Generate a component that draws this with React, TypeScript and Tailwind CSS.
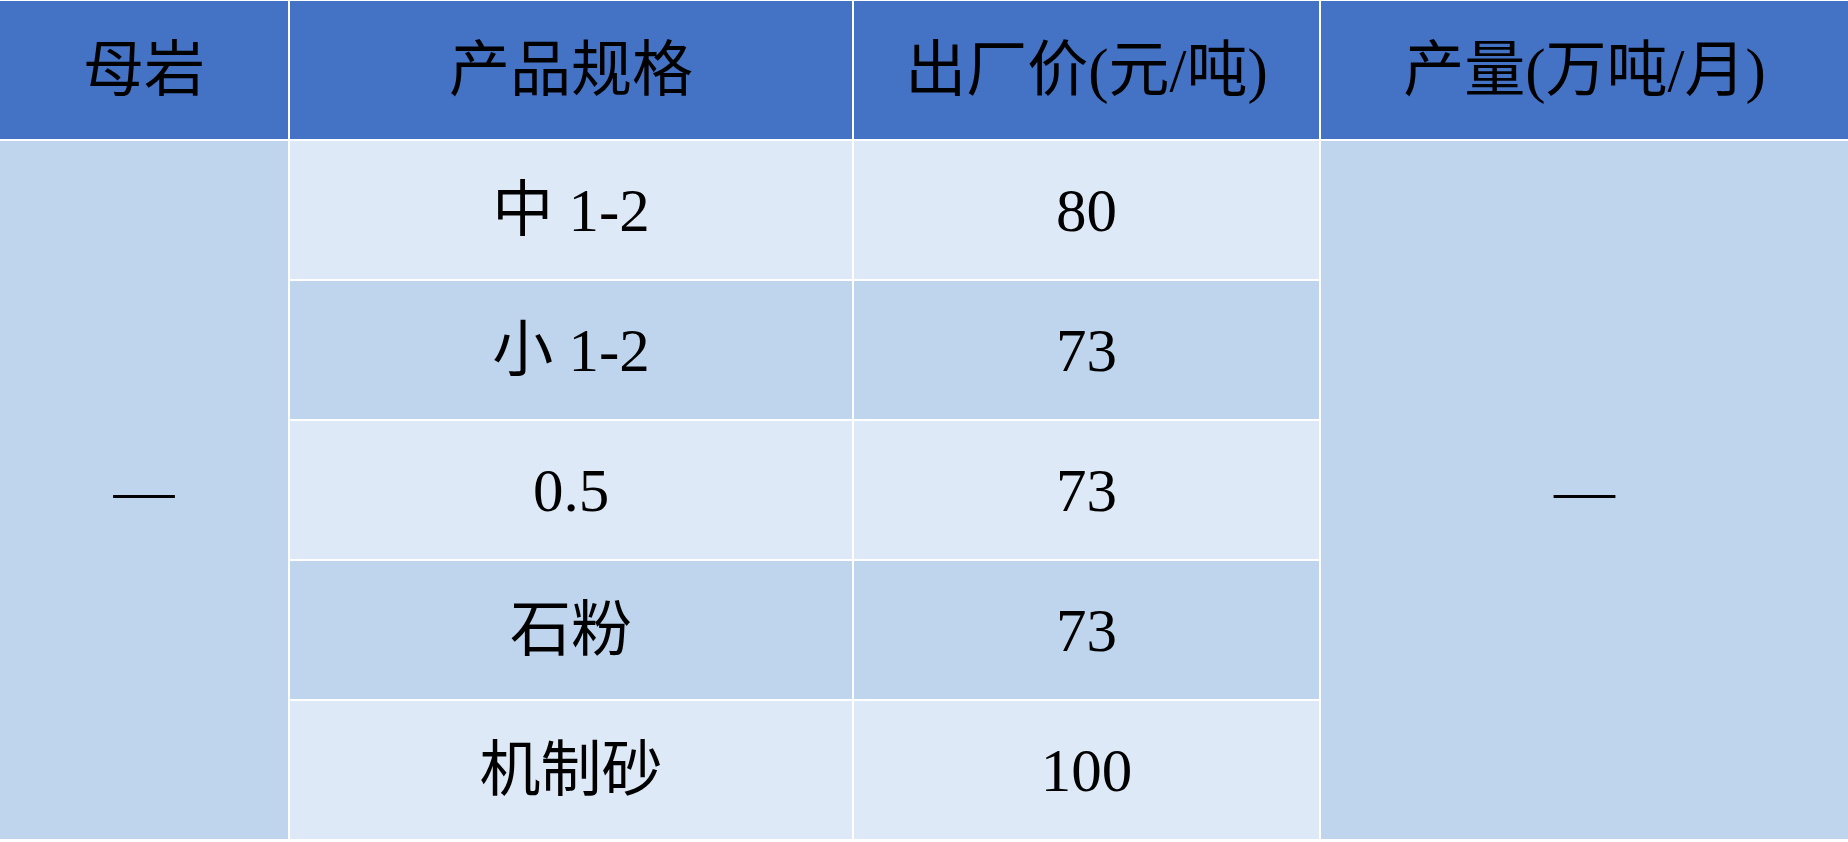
import React from 'react';

const rows = [
  { spec: '中 1-2', price: '80' },
  { spec: '小 1-2', price: '73' },
  { spec: '0.5', price: '73' },
  { spec: '石粉', price: '73' },
  { spec: '机制砂', price: '100' },
];

const headers = ['母岩', '产品规格', '出厂价(元/吨)', '产量(万吨/月)'];

const App: React.FC = () => {
  return (
    <div className="w-[1848px] h-[842px] bg-white pt-px overflow-hidden">
      <div
        className="grid grid-cols-[288px_562px_465px_1fr] grid-rows-[138px_repeat(5,138px)] gap-[2px] text-black text-[61px] leading-none"
        style={{ fontFamily: '"Liberation Serif", "Noto Sans CJK SC", serif' }}
      >
        {/* Header */}
        {headers.map((h) => (
          <div key={h} className="bg-[#4472c4] flex items-center justify-center">
            {h}
          </div>
        ))}

        {/* Merged first column */}
        <div className="row-span-5 col-start-1 row-start-2 bg-[#bfd5ed] flex items-center justify-center">
          —
        </div>

        {rows.map((row, idx) => {
          const bg = idx % 2 === 0 ? 'bg-[#dde9f6]' : 'bg-[#bfd5ed]';
          return (
            <React.Fragment key={idx}>
              <div className={`${bg} col-start-2 flex items-center justify-center`} style={{ gridRowStart: idx + 2 }}>
                {row.spec}
              </div>
              <div className={`${bg} col-start-3 flex items-center justify-center`} style={{ gridRowStart: idx + 2 }}>
                {row.price}
              </div>
            </React.Fragment>
          );
        })}

        {/* Merged last column */}
        <div className="row-span-5 col-start-4 row-start-2 bg-[#bfd5ed] flex items-center justify-center">
          —
        </div>
      </div>
    </div>
  );
};

export default App;
